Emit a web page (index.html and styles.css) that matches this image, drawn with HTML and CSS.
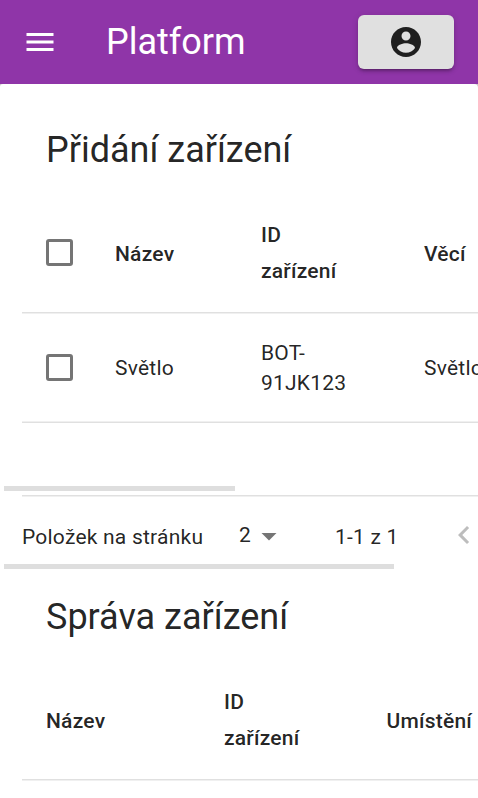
FILE: index.html
```html
<!DOCTYPE html>
<html lang="cs">
<head>
<meta charset="utf-8">
<title>Platform</title>
<link rel="stylesheet" href="styles.css">
</head>
<body>
<header class="appbar">
  <svg class="menu" viewBox="0 0 24 24"><path d="M3 18h18v-2H3v2zm0-5h18v-2H3v2zm0-7v2h18V6H3z"/></svg>
  <h1 class="brand">Platform</h1>
  <button class="account" aria-label="Účet">
    <svg class="account-icon" viewBox="0 0 24 24"><path d="M12 2C6.48 2 2 6.48 2 12s4.480 10 10 10 10-4.480 10-10S17.520 2 12 2zm0 3c1.660 0 3 1.340 3 3s-1.340 3-3 3-3-1.340-3-3 1.340-3 3-3zm0 14.200c-2.500 0-4.710-1.280-6-3.220.030-1.990 4-3.080 6-3.080 1.990 0 5.970 1.090 6 3.080-1.290 1.940-3.500 3.220-6 3.220z"/></svg>
  </button>
</header>
<main class="page">
  <section class="card">
    <h2 class="title">Přidání zařízení</h2>
    <div class="row head cols-select">
      <div class="check"><span class="box"></span></div>
      <div class="single">Název</div>
      <div>ID<br>zařízení</div>
      <div class="single">Věcí</div>
    </div>
    <div class="row body cols-select">
      <div class="check"><span class="box"></span></div>
      <div>Světlo</div>
      <div>BOT-<br>91JK123</div>
      <div>Světlo</div>
    </div>
    <div class="thumb thumb-table"></div>
    <div class="pager">
      <span class="label">Položek na stránku</span>
      <span class="size">2</span>
      <svg class="caret" viewBox="0 0 24 24"><path d="M7 10l5 5 5-5z"/></svg>
      <span class="range">1-1 z 1</span>
      <svg class="prev" viewBox="0 0 24 24"><path d="M15.410 16.590L10.830 12l4.580-4.590L14 6l-6 6 6 6 1.410-1.410z"/></svg>
    </div>
    <div class="thumb thumb-pager"></div>
  </section>
  <section class="card-next">
    <h2 class="title">Správa zařízení</h2>
    <div class="row head cols-plain">
      <div class="single">Název</div>
      <div>ID<br>zařízení</div>
      <div class="single">Umístění</div>
    </div>
  </section>
</main>
</body>
</html>
```
FILE: styles.css
```css
* { box-sizing: border-box; }
html, body { height: 100%; }
body {
  margin: 0;
  overflow: hidden;
  background: #c8c8c8;
  color: rgba(0, 0, 0, 0.87);
  font-family: Roboto, "Liberation Sans", sans-serif;
  font-size: 21px;
  letter-spacing: 0.01071em;
}
h1, h2 { margin: 0; font-weight: 400; }
svg { display: block; flex: none; width: 36px; height: 36px; }

.appbar {
  display: flex;
  align-items: center;
  height: 84px;
  padding: 0 24px 0 22px;
  background: #8f35a8;
}
.menu { fill: #fff; }
.brand {
  flex: 1;
  margin-left: 48px;
  color: #fff;
  font-size: 36px;
  line-height: 48px;
  letter-spacing: 0;
}
.account {
  display: flex;
  align-items: center;
  justify-content: center;
  width: 96px;
  height: 54px;
  padding: 0;
  border: 0;
  border-radius: 6px;
  background: #e0e0e0;
  box-shadow: 0 4px 2px -3px rgba(0, 0, 0, 0.2), 0 3px 3px rgba(0, 0, 0, 0.14), 0 1px 7px rgba(0, 0, 0, 0.12);
}
.account-icon { fill: #1f1f1f; }

.page {
  height: 714px;
  overflow: hidden;
  border-radius: 3px 4px 0 0;
  background: #fff;
}
.title {
  padding-left: 46px;
  font-size: 36px;
  line-height: 48px;
  letter-spacing: 0;
  white-space: nowrap;
}
.card { height: 485px; padding-top: 42px; }
.card-next { padding-top: 24px; }

.row {
  display: grid;
  align-items: center;
  margin-left: 22px;
  white-space: nowrap;
}
.cols-select { grid-template-columns: 93px 146px 163px 100px; }
.cols-plain { grid-template-columns: 178px 162.5px 120px; padding-left: 24px; }
.head {
  height: 122px;
  margin-top: 18px;
  padding-top: 1px;
  border-bottom: 1px solid #f0f0f0;
  box-shadow: inset 0 -1px #e0e0e0;
  font-weight: 500;
  line-height: 36px;
}
.head .single { padding-top: 2px; }
.body {
  height: 109px;
  border-bottom: 1px solid #e0e0e0;
  box-shadow: inset 0 -1px #f0f0f0;
  line-height: 30px;
}
.check { padding: 0 0 2px 24px; }
.box {
  display: block;
  width: 27px;
  height: 27px;
  border: 3px solid #757575;
  border-radius: 3px;
}

.thumb { height: 5px; margin-left: 4px; background: #dedede; }
.thumb-table { width: 231px; margin-top: 63px; }
.thumb-pager { width: 390px; }
.pager {
  display: flex;
  align-items: center;
  height: 69px;
  margin: 4px 0 0 22px;
  padding-top: 13px;
  border-top: 1px solid #e0e0e0;
  box-shadow: inset 0 1px #f0f0f0;
  line-height: 30px;
  white-space: nowrap;
}
.pager > * { flex: none; }
.label { width: 217px; }
.size { width: 12px; margin-top: -4px; }
.caret { margin: -1px 0 0 0; fill: #757575; }
.range { width: 111px; margin-left: 48px; }
.prev { margin-top: -3px; fill: #bdbdbd; }
```
